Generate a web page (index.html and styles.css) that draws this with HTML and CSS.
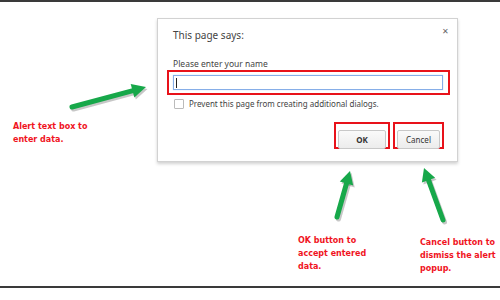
FILE: index.html
```html
<!DOCTYPE html>
<html lang="en">
<head>
    <meta charset="UTF-8">
    <meta name="viewport" content="width=device-width, initial-scale=1.0">
    <title>Prompt dialog</title>
    <link rel="stylesheet" href="styles.css">
</head>
<body>
    <div class="page">
        <div class="rule"></div>
        <div class="stage">
            <div class="dialog">
                <span class="close">&#x2715;</span>
                <div class="title">This page says:</div>
                <div class="label">Please enter your name</div>
                <div class="mark mark-input">
                    <div class="input"><span class="caret"></span></div>
                </div>
                <label class="check">
                    <span class="box"></span>
                    <span>Prevent this page from creating additional dialogs.</span>
                </label>
                <div class="actions">
                    <div class="mark mark-ok"><button class="btn btn-ok">OK</button></div>
                    <div class="mark mark-cancel"><button class="btn">Cancel</button></div>
                </div>
            </div>
        </div>
        <div class="rule"></div>

        <!-- callout arrows -->
        <svg class="arrows" width="500" height="300" viewBox="0 0 500 300">
            <g class="shadow" transform="translate(1.5 2)">
                <line x1="72" y1="107" x2="133" y2="90.7"/>
                <polygon points="146,87 134.3,97.5 130.7,83.9"/>
                <line x1="337" y1="217" x2="346.5" y2="183.5"/>
                <polygon points="350,171 353.2,185.4 339.8,181.6"/>
                <line x1="443" y1="220" x2="428.5" y2="180.2"/>
                <polygon points="424,168 435.1,177.8 421.9,182.6"/>
            </g>
            <g class="arrow">
                <line x1="72" y1="107" x2="133" y2="90.7"/>
                <polygon points="146,87 134.3,97.5 130.7,83.9"/>
                <line x1="337" y1="217" x2="346.5" y2="183.5"/>
                <polygon points="350,171 353.2,185.4 339.8,181.6"/>
                <line x1="443" y1="220" x2="428.5" y2="180.2"/>
                <polygon points="424,168 435.1,177.8 421.9,182.6"/>
            </g>
        </svg>

        <p class="note note-alert">Alert text box to<br>enter data.</p>
        <p class="note note-ok">OK button to<br>accept entered<br>data.</p>
        <p class="note note-cancel">Cancel button to<br>dismiss the alert<br>popup.</p>
    </div>
</body>
</html>
```

FILE: styles.css
```css
body {
    margin: 0;
    background: #fff;
    font-family: "Noto Sans", "Open Sans", sans-serif;
    color: #333;
}

.page {
    position: relative;
    width: 500px;
    height: 300px;
}

.rule {
    height: 2px;
    background: #3a3a3a;
}

.stage {
    height: 268px;
    padding: 16px 0 0 157px;
}

/* dialog */
.dialog {
    position: relative;
    width: 270px;
    padding: 8px 14px 12px 15px;
    border: 1px solid #d2d2d2;
    box-shadow: 0 2px 3px rgba(0, 0, 0, 0.18);
    background: #fff;
}

.close {
    position: absolute;
    top: 6px;
    right: 8px;
    font-size: 8px;
    color: #666;
}

.title {
    font-size: 10px;
    line-height: 16px;
    color: #444;
}

.label {
    margin-top: 15px;
    font-size: 8.5px;
    line-height: 12px;
    color: #444;
}

.mark {
    border: 2px solid #e8121a;
}

.mark-input {
    margin: 0 -7px 0 -6px;
    padding: 3px 5px 3px 4px;
}

.input {
    height: 13px;
    border: 1px solid #86aee8;
    box-shadow: 0 0 1px #b9d0f3;
    display: flex;
    align-items: center;
    padding-left: 2px;
}

.caret {
    width: 1px;
    height: 10px;
    background: #222;
}

.check {
    display: flex;
    align-items: center;
    gap: 5px;
    margin-top: 3px;
    font-size: 8px;
    line-height: 12px;
    color: #444;
}

.box {
    width: 8px;
    height: 8px;
    border: 1px solid #bbb;
    border-radius: 1px;
    margin-left: 1px;
}

.actions {
    display: flex;
    justify-content: flex-end;
    gap: 3px;
    margin-top: 12px;
    margin-right: -1px;
}

.mark-ok,
.mark-cancel {
    padding: 2px;
    height: 27px;
    box-sizing: border-box;
}

.mark-ok { width: 56px; }
.mark-cancel { width: 51px; }

.btn {
    width: 100%;
    height: 100%;
    margin: 0;
    padding: 0;
    border: 1px solid #c8c8c8;
    border-radius: 2px;
    background: linear-gradient(#fafafa, #ececec);
    font-family: "Noto Sans", sans-serif;
    font-size: 8px;
    color: #333;
}

.btn-ok {
    font-weight: bold;
}

/* callouts */
.arrows {
    position: absolute;
    top: 0;
    left: 0;
}

.arrow line,
.shadow line {
    stroke-width: 5;
    stroke-linecap: round;
}

.arrow line { stroke: #17a84a; }
.arrow polygon { fill: #17a84a; }
.shadow line { stroke: rgba(0, 0, 0, 0.22); }
.shadow polygon { fill: rgba(0, 0, 0, 0.22); }

.note {
    position: absolute;
    margin: 0;
    font-family: "DejaVu Sans", sans-serif;
    font-weight: bold;
    font-size: 8px;
    line-height: 13px;
    color: #f0141e;
}

.note-alert { left: 13px; top: 120px; }
.note-ok { left: 298px; top: 234px; }
.note-cancel { left: 420px; top: 236px; }
```
